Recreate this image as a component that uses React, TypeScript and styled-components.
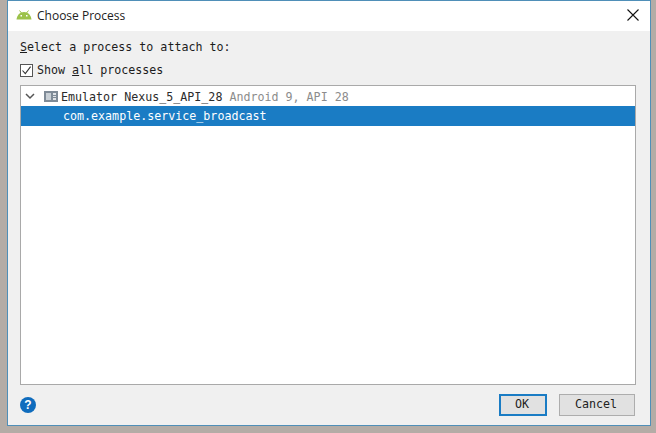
import styled, { createGlobalStyle } from "styled-components";

const GlobalStyle = createGlobalStyle`
  html, body {
    margin: 0;
    padding: 0;
    width: 656px;
    height: 433px;
    overflow: hidden;
    background: #b4aca6;
  }
`;

export default function App() {
  return (
    <>
      <GlobalStyle />
      <SWindow>
        <STitleBar>
          <AndroidLogo />
          <STitle>Choose Process</STitle>
          <SClose aria-label="Close">
            <svg width="12" height="12" viewBox="0 0 12 12">
              <path d="M0.5 0.5L11.5 11.5M11.5 0.5L0.5 11.5" stroke="#111" strokeWidth="1.1" fill="none" />
            </svg>
          </SClose>
        </STitleBar>
        <SBody>
          <SPrompt>
            <u>S</u>elect a process to attach to:
          </SPrompt>
          <SCheckRow>
            <SCheckbox>
              <svg width="11" height="11" viewBox="0 0 11 11">
                <path d="M1.5 5.5L4.3 8.6L9.6 1.6" stroke="#333" strokeWidth="1.1" fill="none" />
              </svg>
            </SCheckbox>
            <span>
              Show <u>a</u>ll processes
            </span>
          </SCheckRow>
          <STree>
            <SDeviceRow>
              <svg width="10" height="7" viewBox="0 0 10 7">
                <path d="M1 1L5 5L9 1" stroke="#555" strokeWidth="1.5" fill="none" />
              </svg>
              <DeviceIcon />
              <span>Emulator Nexus_5_API_28</span>
              <SMuted>Android 9, API 28</SMuted>
            </SDeviceRow>
            <SProcessRow>com.example.service_broadcast</SProcessRow>
          </STree>
          <SFooter>
            <SHelp>?</SHelp>
            <SButtons>
              <SButton $primary>OK</SButton>
              <SButton>Cancel</SButton>
            </SButtons>
          </SFooter>
        </SBody>
      </SWindow>
    </>
  );
}

function AndroidLogo() {
  return (
    <svg width="16" height="10" viewBox="0 0 16 10">
      <path d="M0.5 9.5C1 5 4 2 8 2C12 2 15 5 15.5 9.5Z" fill="#9cc24a" />
      <path d="M3.5 0.5L5.5 3M12.5 0.5L10.5 3" stroke="#9cc24a" strokeWidth="1" fill="none" />
      <rect x="4.5" y="5" width="1.5" height="1.5" fill="#fff" />
      <rect x="10" y="5" width="1.5" height="1.5" fill="#fff" />
    </svg>
  );
}

function DeviceIcon() {
  return (
    <svg width="14" height="11" viewBox="0 0 14 11">
      <rect x="0" y="0" width="14" height="11" fill="#7f8b97" />
      <rect x="2" y="2" width="5" height="7" fill="#c9d0d6" />
      <rect x="9" y="2" width="3" height="2" fill="#dfe3e7" />
      <rect x="9" y="5" width="3" height="1" fill="#dfe3e7" />
      <rect x="9" y="7" width="3" height="2" fill="#dfe3e7" />
    </svg>
  );
}

const SWindow = styled.div`
  box-sizing: border-box;
  width: 644px;
  height: 426px;
  margin-left: 7px;
  display: flex;
  flex-direction: column;
  border: 1px solid #4f8fb8;
  background: #f0f0f0;
  font-family: "DejaVu Sans Mono", monospace;
  font-size: 11.67px;
  color: #1c1c1c;
`;

const STitleBar = styled.div`
  box-sizing: border-box;
  height: 30px;
  flex: none;
  display: flex;
  align-items: center;
  padding: 0 11px 2px 8px;
  gap: 5px;
  background: #fff;
`;

const STitle = styled.div`
  flex: 1;
  font-family: "Open Sans", sans-serif;
  font-size: 12px;
  color: #222;
`;

const SClose = styled.div`
  display: flex;
  width: 12px;
  height: 12px;
`;

const SBody = styled.div`
  flex: 1;
  display: flex;
  flex-direction: column;
  padding: 9px 14px 8px 12px;
  min-height: 0;
`;

const SPrompt = styled.div`
  height: 15px;
  line-height: 15px;
`;

const SCheckRow = styled.div`
  display: flex;
  align-items: center;
  gap: 4px;
  height: 15px;
  line-height: 15px;
  margin-top: 8px;
`;

const SCheckbox = styled.div`
  box-sizing: border-box;
  width: 13px;
  height: 13px;
  display: flex;
  align-items: center;
  justify-content: center;
  border: 1px solid #555;
  background: #fff;
`;

const STree = styled.div`
  flex: 1;
  margin-top: 7px;
  border: 1px solid #a9a9a9;
  background: #fff;
  min-height: 0;
`;

const SDeviceRow = styled.div`
  box-sizing: border-box;
  height: 20px;
  display: flex;
  align-items: center;
  padding: 1px 0 0 4px;
  color: #2b2b2b;
  svg:first-child {
    margin-right: 9px;
  }
  svg:nth-child(2) {
    margin-right: 3px;
  }
  span + span {
    margin-left: 7px;
  }
`;

const SMuted = styled.span`
  color: #8c8c8c;
`;

const SProcessRow = styled.div`
  height: 20px;
  line-height: 20px;
  padding-left: 42px;
  background: #1a7cc4;
  color: #fff;
`;

const SFooter = styled.div`
  flex: none;
  display: flex;
  align-items: center;
  justify-content: space-between;
  margin-top: 8px;
  height: 24px;
`;

const SHelp = styled.div`
  width: 16px;
  height: 16px;
  border-radius: 50%;
  background: #0f6cbd;
  color: #fff;
  font-family: "Liberation Sans", sans-serif;
  font-weight: bold;
  font-size: 12px;
  line-height: 16px;
  text-align: center;
`;

const SButtons = styled.div`
  display: flex;
  gap: 12px;
  margin-right: 1px;
`;

const SButton = styled.button<{ $primary?: boolean }>`
  box-sizing: border-box;
  width: ${(p) => (p.$primary ? "48px" : "76px")};
  height: 22px;
  padding: 0 2px 2px 0;
  font: inherit;
  color: #222;
  background: #e1e1e1;
  border: ${(p) => (p.$primary ? "2px solid #1a7cc4" : "1px solid #adadad")};
`;
